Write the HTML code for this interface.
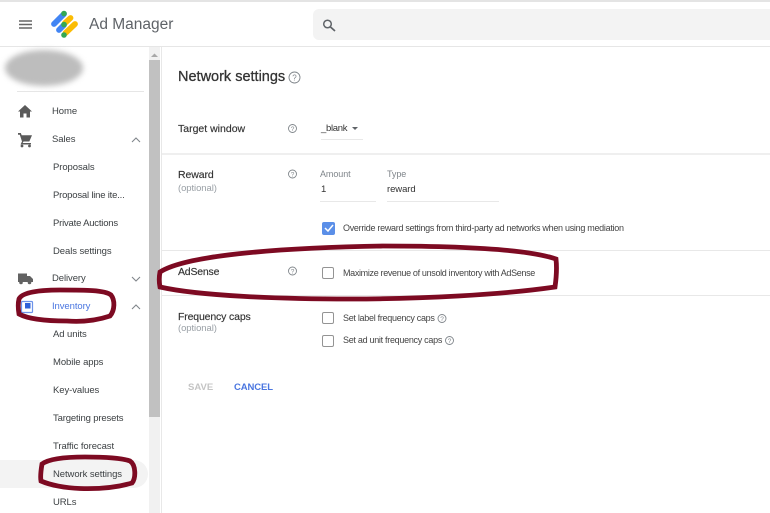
<!DOCTYPE html>
<html><head><meta charset="utf-8"><style>
html,body{margin:0;padding:0;background:#fff}
#p{position:relative;width:770px;height:513px;overflow:hidden;background:#fff;font-family:"Liberation Sans",sans-serif;color:#3c4043;filter:blur(.3px)}
.t{position:absolute;white-space:nowrap;line-height:14px;font-size:9.5px;color:#3c4043;letter-spacing:-.08px}
.b{position:absolute;background:#e8e8e8}
.l{font-size:10.5px;color:#333;letter-spacing:-.1px;-webkit-text-stroke:.15px #333}
.o{font-size:9.5px;color:#9aa0a6}
.c{font-size:9px;color:#444;letter-spacing:-.29px}
.cb{position:absolute;width:10px;height:10px;border:1.5px solid #949494;border-radius:2px}
svg{position:absolute;left:0;top:0}
</style></head><body><div id="p">
<div class="b" style="left:0;top:0;width:770px;height:2px;background:#e4e4e4"></div>
<div class="b" style="left:0;top:46px;width:770px;height:1px;background:#e6e6e6"></div>
<div style="position:absolute;left:313px;top:9px;width:470px;height:31px;background:#f3f3f3;border-radius:6px"></div>
<div class="t" style="left:89px;top:15px;font-size:15.5px;line-height:20px;color:#5f6368;letter-spacing:0">Ad Manager</div>
<div style="position:absolute;left:5px;top:50px;width:78px;height:36px;border-radius:50%;background:#bdbdbd;filter:blur(3px)"></div>
<div class="b" style="left:17px;top:91px;width:127px;height:1px;background:#e6e6e6"></div>
<div style="position:absolute;left:0;top:460px;width:148px;height:28px;background:#f3f3f3;border-radius:0 14px 14px 0"></div>
<div style="position:absolute;left:149px;top:47px;width:11px;height:466px;background:#f1f1f1"></div>
<div style="position:absolute;left:149px;top:60px;width:11px;height:357px;background:#c1c1c1"></div>
<div class="b" style="left:161px;top:47px;width:1px;height:466px;background:#e8e8e8"></div>
<div class="t" style="left:52px;top:105px">Home</div>
<div class="t" style="left:52px;top:133px">Sales</div>
<div class="t" style="left:53px;top:161px">Proposals</div>
<div class="t" style="left:53px;top:189px;letter-spacing:-.2px">Proposal line ite...</div>
<div class="t" style="left:53px;top:217px;letter-spacing:-.2px">Private Auctions</div>
<div class="t" style="left:53px;top:245px">Deals settings</div>
<div class="t" style="left:52px;top:272px">Delivery</div>
<div class="t" style="left:52px;top:300px;color:#4a76e0">Inventory</div>
<div class="t" style="left:53px;top:328px">Ad units</div>
<div class="t" style="left:53px;top:356px">Mobile apps</div>
<div class="t" style="left:53px;top:384px">Key-values</div>
<div class="t" style="left:53px;top:412px;letter-spacing:-.15px">Targeting presets</div>
<div class="t" style="left:53px;top:440px">Traffic forecast</div>
<div class="t" style="left:53px;top:468px">Network settings</div>
<div class="t" style="left:53px;top:496px">URLs</div>
<div class="t" style="left:178px;top:68px;font-size:14.5px;line-height:18px;color:#333;letter-spacing:0;-webkit-text-stroke:.3px #333">Network settings</div>
<div class="t l" style="left:178px;top:122px;letter-spacing:0">Target window</div>
<div class="t" style="left:321px;top:122px;color:#333;letter-spacing:-.3px">_blank</div>
<div class="b" style="left:321px;top:139px;width:42px;height:1px"></div>
<div class="b" style="left:162px;top:153px;width:608px;height:2px;background:#efefef"></div>
<div class="t l" style="left:178px;top:168px">Reward</div>
<div class="t o" style="left:178px;top:182px">(optional)</div>
<div class="t" style="left:320px;top:167px;font-size:9px;color:#80868b">Amount</div>
<div class="t" style="left:387px;top:167px;font-size:9px;color:#80868b">Type</div>
<div class="t" style="left:321px;top:183px;color:#333">1</div>
<div class="t" style="left:387px;top:183px;color:#333">reward</div>
<div class="b" style="left:320px;top:201px;width:56px;height:1px"></div>
<div class="b" style="left:387px;top:201px;width:112px;height:1px"></div>
<div style="position:absolute;left:322px;top:222px;width:13px;height:13px;background:#5b8fe8;border-radius:2px"></div>
<div class="t c" style="left:343px;top:221px">Override reward settings from third-party ad networks when using mediation</div>
<div class="b" style="left:162px;top:250px;width:608px;height:1px"></div>
<div class="t l" style="left:178px;top:265px;letter-spacing:-.2px">AdSense</div>
<div class="cb" style="left:322px;top:267px"></div>
<div class="t c" style="left:343px;top:266px;letter-spacing:-.33px">Maximize revenue of unsold inventory with AdSense</div>
<div class="b" style="left:162px;top:295px;width:608px;height:1px"></div>
<div class="t l" style="left:178px;top:310px;letter-spacing:-.15px">Frequency caps</div>
<div class="t o" style="left:178px;top:322px">(optional)</div>
<div class="cb" style="left:322px;top:312px"></div>
<div class="t c" style="left:343px;top:311px">Set label frequency caps</div>
<div class="cb" style="left:322px;top:335px"></div>
<div class="t c" style="left:343px;top:333px">Set ad unit frequency caps</div>
<div class="t" style="left:188px;top:381px;font-weight:bold;color:#c4c4c4;letter-spacing:0">SAVE</div>
<div class="t" style="left:234px;top:381px;font-weight:bold;color:#4a76e0;letter-spacing:-.1px">CANCEL</div>
<svg width="770" height="513" viewBox="0 0 770 513">
<g fill="none" stroke="#666" stroke-width="1.5"><path d="M19 21h13M19 24.500h13M19 28h13"/></g>
<g stroke-width="5.800" stroke-linecap="round" fill="none"><path d="M65 23L70.500 18" stroke="#fbbc04"/><path d="M65.500 33L75 24" stroke="#fbbc04"/><path d="M54 24L64 14" stroke="#4285f4"/><path d="M59 30L64 25" stroke="#4285f4"/></g>
<g fill="#34a853"><circle cx="64" cy="13.500" r="2.800"/><circle cx="64" cy="24.500" r="2.800"/><circle cx="64" cy="35" r="2.800"/></g>
<circle cx="327.500" cy="24" r="3.800" fill="none" stroke="#5f6368" stroke-width="1.500"/><path d="M330.500 27L335 31" stroke="#5f6368" stroke-width="1.700"/>
<path d="M25 105L18 111.500H20V117.500H23.500V113.500H26.500V117.500H30V111.500H32Z" fill="#5a5a5a"/>
<path d="M18 133H20.800L21.700 135.200H32L29.300 141.500H23.500L22.700 143H31V144.500H20.500L22 141.500L19.800 134.800H18Z" fill="#5a5a5a"/><circle cx="22" cy="146" r="1.400" fill="#5a5a5a"/><circle cx="29.500" cy="146" r="1.400" fill="#5a5a5a"/>
<path d="M18 273.500H27V282H18ZM27 276H30L33 279V282H27Z" fill="#626262"/><circle cx="21" cy="282.500" r="1.800" fill="#626262"/><circle cx="29.500" cy="282.500" r="1.800" fill="#626262"/>
<rect x="21.500" y="301.500" width="11" height="11" fill="none" stroke="#6d93ea" stroke-width="1.200" rx="1"/><rect x="25" y="303" width="5.500" height="5.500" fill="#2f62d8"/>
<g fill="none" stroke="#80868b" stroke-width="1.100"><path d="M132 142L136 138L140 142"/><path d="M132 277L136 281L140 277"/><path d="M132 309L136 305L140 309"/></g>
<path d="M151 57L154.500 53.500L158 57Z" fill="#a8a8a8"/>
<path d="M352 127H358L355 130Z" fill="#5f6368"/>
<path d="M325 228L328 231L333 225" fill="none" stroke="#fff" stroke-width="1.500"/>
<g fill="none" stroke="#80868b" stroke-width=".9"><circle cx="294.500" cy="77.500" r="5.500"/><circle cx="292.500" cy="128.500" r="4"/><circle cx="292.500" cy="174" r="4"/><circle cx="292.500" cy="271" r="4"/><circle cx="442" cy="318.500" r="4"/><circle cx="449.500" cy="340.500" r="4"/></g>
<g font-family="Liberation Sans" fill="#80868b" text-anchor="middle"><text x="294.500" y="80.500" font-size="8">?</text><text x="292.500" y="131" font-size="6.500">?</text><text x="292.500" y="176.500" font-size="6.500">?</text><text x="292.500" y="273.500" font-size="6.500">?</text><text x="442" y="321" font-size="6.500">?</text><text x="449.500" y="343" font-size="6.500">?</text></g>
<g fill="none" stroke="#7d0a22" stroke-width="4.800">
<path d="M19 299C22 292 40 290 60 290C85 290 105 290 111 295C115 300 115 310 110 316C95 321 80 322 67 321C50 321 30 320 19 314C18 308 18 303 19 299Z"/>
<path d="M42 464C50 458 70 457 85 457C105 457 122 458 130 461C136 465 136 478 132 483C115 488 95 489 80 488.500C65 488 50 485 41 481C40 476 41 470 42 464Z"/>
<path d="M160 272C185 256 270 248 383 246C470 246 530 250 556 259C557 268 556 280 555 287C500 295 420 299 350 299C280 299 200 296 160 287C159 282 159 277 160 272Z"/>
</g>
</svg>
</div></body></html>
